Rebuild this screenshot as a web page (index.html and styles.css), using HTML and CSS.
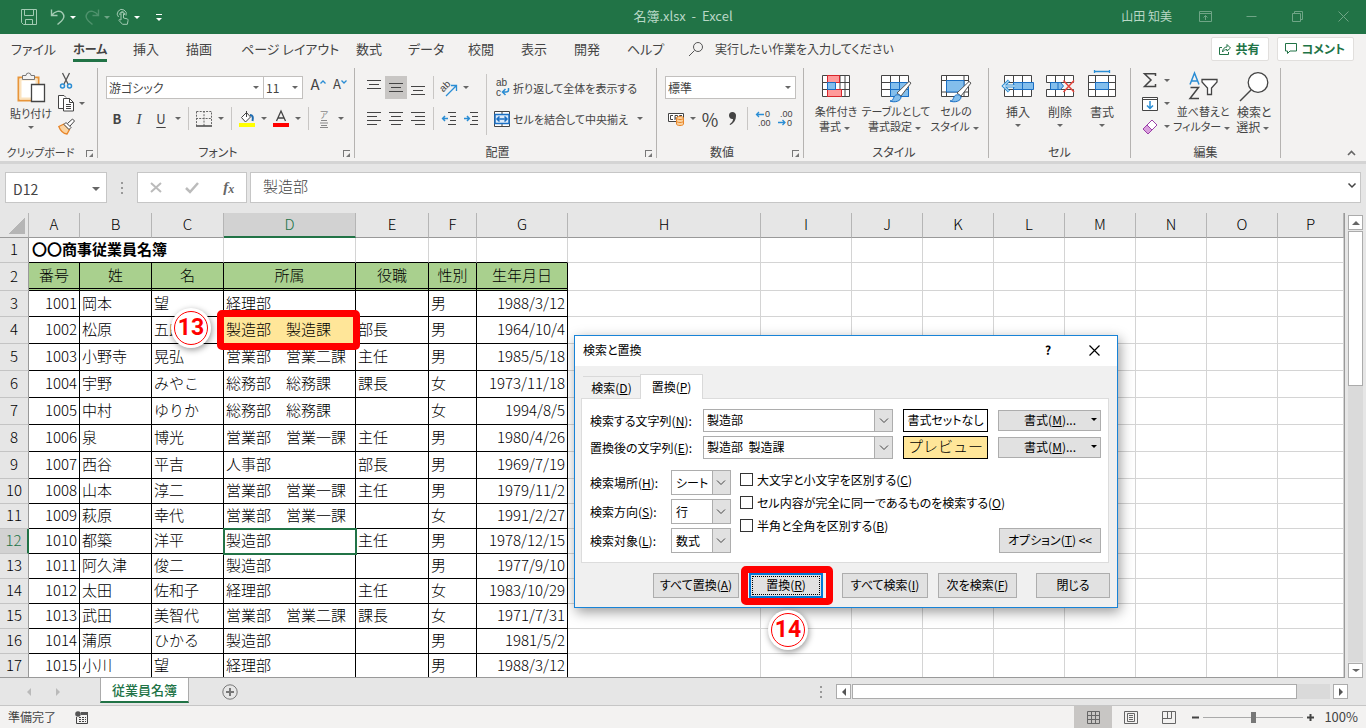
FILE: index.html
```html
<!DOCTYPE html>
<html lang="ja">
<head>
    <meta charset="UTF-8">
    <meta name="viewport" content="width=device-width, initial-scale=1.0">
    <title>名簿.xlsx - Excel</title>
    <link rel="stylesheet" href="styles.css">
</head>
<body>
    <header class="titlebar">
        <div class="quick">
            <button class="save" aria-label="上書き保存"><svg width="18" height="18" viewBox="0 0 18 18"><path d="M1.5 1.5h15v15H3.5l-2-2zM4.5 1.5v6h9v-6M5.5 16.5v-5h7v5"/></svg></button>
            <button class="undo" aria-label="元に戻す"><svg width="16" height="18" viewBox="0 0 16 18"><path d="M1.5 1.5v6h6M1.5 7.5C5 3 10 2 12.5 5s1 6-1 8l-4 3.5" stroke-width="1.4"/></svg></button>
            <span class="arrow"></span>
            <button class="redo" aria-label="やり直し"><svg width="16" height="18" viewBox="0 0 16 18"><path d="M14.5 1.5v6h-6M14.5 7.5C11 3 6 2 3.5 5s-1 6 1 8l4 3.5" stroke-width="1.4"/></svg></button>
            <span class="arrow dim"></span>
            <button class="touch" aria-label="タッチ"><svg width="14" height="18" viewBox="0 0 14 18"><path d="M5 12V5.5a1.2 1.2 0 0 1 2.500 0V10l3.500.8c1 .3 1.200 1 1 2l-.7 3.500H6.500L3 12.500c-.5-1 .8-1.500 2-.2M2.500 9A4.500 4.500 0 1 1 10 7.500M4 7a2.400 2.400 0 1 1 4.500 0"/></svg></button>
            <span class="arrow"></span>
            <button class="more" aria-label="カスタマイズ"><span class="arrow"></span></button>
        </div>
        <div class="doc-name">名簿.xlsx&nbsp; -&nbsp; Excel</div>
        <div class="window-tools">
            <span class="user">山田 知美</span>
            <button aria-label="リボンの表示オプション"><svg width="13" height="11" viewBox="0 0 13 11"><path d="M.5 .5h12v10H.5zM.5 2.5h12M6.500 9V4.500M4.500 6.500l2-2 2 2"/></svg></button>
            <button aria-label="最小化"><svg width="11" height="11" viewBox="0 0 11 11"><path d="M.5 5.500h10"/></svg></button>
            <button aria-label="元のサイズに戻す"><svg width="11" height="11" viewBox="0 0 11 11"><path d="M.5 2.500h8v8h-8zM2.500 2.500v-2h8v8h-2"/></svg></button>
            <button aria-label="閉じる"><svg width="11" height="11" viewBox="0 0 11 11"><path d="M.5 .5l10 10M10.500 .5l-10 10"/></svg></button>
        </div>
    </header>

    <nav class="tabs">
        <a href="#">ファイル</a>
        <a href="#" class="active">ホーム</a>
        <a href="#">挿入</a>
        <a href="#">描画</a>
        <a href="#">ページ レイアウト</a>
        <a href="#">数式</a>
        <a href="#">データ</a>
        <a href="#">校閲</a>
        <a href="#">表示</a>
        <a href="#">開発</a>
        <a href="#">ヘルプ</a>
        <a href="#" class="tell-me"><svg width="16" height="16" viewBox="0 0 16 16"><circle cx="10" cy="6" r="4.500"/><path d="M6.500 9.500L1 15"/></svg>実行したい作業を入力してください</a>
        <button class="share"><svg width="12" height="13" viewBox="0 0 12 13"><path d="M3 4.500H.5v7h9V9M3.500 9c0-3 2-5 4.500-5V1.500L11.500 5 8 8V6.500C6 6.500 4.500 7.500 3.500 9z"/></svg>共有</button>
        <button class="share"><svg width="12" height="12" viewBox="0 0 12 12"><path d="M.5 .5h11V8H5L2.500 10.500V8h-2z"/></svg>コメント</button>
    </nav>

    <section class="ribbon">
        <div class="group">
            <div class="tools">
                <button class="big paste">
                    <svg width="28" height="32" viewBox="0 0 28 32"><path d="M1.500 5.500h20v23h-20z" fill="#fff" stroke="#e8953a" stroke-width="2"/><path d="M3.500 7.500h16v19h-16z" fill="none" stroke="#fbe3bf" stroke-width="2"/><path d="M5.500 7.500v-4h3.500a2.500 2.500 0 0 1 5 0h3.500v4z" fill="#f3f2f1" stroke="#777"/><path d="M14.500 12.500h13v17h-13z" fill="#fff" stroke="#444" stroke-width="1.300"/></svg>
                    貼り付け<span class="arrow"></span>
                </button>
                <div class="stack">
                    <button aria-label="切り取り"><svg width="14" height="18" viewBox="0 0 14 18"><path d="M3.500 1l5.500 11M10.500 1L5 12" stroke="#555" stroke-width="1.300"/><circle cx="3.500" cy="14" r="2" stroke="#2a8dd4" stroke-width="1.500"/><circle cx="10.500" cy="14" r="2" stroke="#2a8dd4" stroke-width="1.500"/></svg></button>
                    <button aria-label="コピー"><svg width="17" height="17" viewBox="0 0 17 17"><path d="M5 13.500H.5V.5H6l2 2" fill="#fff"/><path d="M5.500 3.500h6l4 4v8.500h-10z" fill="#fff"/><path d="M11.500 3.500v4h4M8 9.500h5M8 11.500h5M8 13.500h5"/></svg></button><span class="arrow"></span>
                    <button aria-label="書式のコピー"><svg width="17" height="17" viewBox="0 0 17 17"><path d="M.8 8.500L6 6l5.500 5.500L9 16c-3-.3-6.500-3-8.200-7.500z" fill="#fbd3a0" stroke="#e8862a" stroke-width="1.300"/><path d="M6 6.500L8 4.500l5 5-2 2zM9.500 5.500l5-4.500 2 2-4.500 5" fill="#fff"/></svg></button>
                </div>
            </div>
            <div class="group-name">クリップボード<span class="launch"></span></div>
        </div>

        <div class="group">
            <div class="tools rows">
                <div class="row">
                    <span class="select font-name"><select aria-label="フォント"><option>游ゴシック</option></select><span class="arrow"></span></span>
                    <span class="select font-size"><select aria-label="フォント サイズ"><option>11</option></select><span class="arrow"></span></span>
                    <button class="grow">A<svg width="6" height="4" viewBox="0 0 6 4"><path d="M.5 3.500L3 1l2.500 2.500" stroke="#2a8dd4" stroke-width="1.300"/></svg></button>
                    <button class="grow small">A<svg width="6" height="4" viewBox="0 0 6 4"><path d="M.5 .5L3 3 5.500 .5" stroke="#2a8dd4" stroke-width="1.300"/></svg></button>
                </div>
                <div class="row">
                    <button class="bold">B</button>
                    <button class="italic">I</button>
                    <button class="under">U</button><span class="arrow"></span>
                    <span class="sep"></span>
                    <button aria-label="罫線"><svg width="16" height="16" viewBox="0 0 16 16"><path d="M.5 .5h15v14M.5 .5v14M8 0v15M0 7.500h16" stroke-dasharray="2 1.200" stroke="#666"/><path d="M0 15h16" stroke-width="1.500"/></svg></button><span class="arrow"></span>
                    <span class="sep"></span>
                    <button aria-label="塗りつぶしの色"><svg width="16" height="16" viewBox="0 0 16 16"><path d="M2.500 6.500L7.500 1.500l4 4.500L6.500 11zM7.500 0v6" fill="#fff"/><path d="M11 4c2.500 0 3.500 2 2.500 6" stroke="#1f6cb0" stroke-width="2"/><path d="M0 12h16v4H0z" fill="#ff0" stroke="none"/></svg></button><span class="arrow"></span>
                    <button aria-label="フォントの色"><svg width="16" height="16" viewBox="0 0 16 16"><path d="M3.500 10L8 0l4.500 10M5 7h6" stroke-width="1.300"/><path d="M0 12h16v4H0z" fill="#f00" stroke="none"/></svg></button><span class="arrow"></span>
                    <span class="sep"></span>
                    <button class="ruby"><span>ア</span><svg width="8" height="8" viewBox="0 0 8 8"><path d="M1 .5h6M0 3h8M1 5.500h6M0 7.500h8" stroke="#888"/></svg></button><span class="arrow"></span>
                </div>
            </div>
            <div class="group-name">フォント<span class="launch"></span></div>
        </div>

        <div class="group">
            <div class="tools">
                <div class="rows">
                    <div class="row">
                        <button aria-label="上揃え"><svg width="14" height="16" viewBox="0 0 14 16"><path d="M0 .5h14M2 4.500h10M0 8.500h14"/></svg></button>
                        <button class="pressed" aria-label="上下中央揃え"><svg width="14" height="16" viewBox="0 0 14 16"><path d="M0 3.500h14M2 7.500h10M0 11.500h14"/></svg></button>
                        <button aria-label="下揃え"><svg width="14" height="16" viewBox="0 0 14 16"><path d="M0 6.500h14M2 10.500h10M0 14.500h14"/></svg></button>
                        <span class="sep"></span>
                        <button aria-label="方向"><svg width="18" height="18" viewBox="0 0 18 18"><text x="1" y="12" transform="rotate(-45 4 10)" class="ab">ab</text><path d="M6 17L16 7M11 6.500h5.500V12" stroke="#2a8dd4" stroke-width="1.300"/></svg></button><span class="arrow"></span>
                    </div>
                    <div class="row">
                        <button aria-label="左揃え"><svg width="14" height="14" viewBox="0 0 14 14"><path d="M0 .5h14M0 4.500h10M0 8.500h14M0 12.500h10"/></svg></button>
                        <button aria-label="中央揃え"><svg width="14" height="14" viewBox="0 0 14 14"><path d="M0 .5h14M2 4.500h10M0 8.500h14M2 12.500h10"/></svg></button>
                        <button aria-label="右揃え"><svg width="14" height="14" viewBox="0 0 14 14"><path d="M0 .5h14M4 4.500h10M0 8.500h14M4 12.500h10"/></svg></button>
                        <span class="sep"></span>
                        <button aria-label="インデントを減らす"><svg width="14" height="14" viewBox="0 0 14 14"><path d="M6 .5h8M8 4.500h6M8 8.500h6M6 12.500h8"/><path d="M6 6.500H.8M3 4L.6 6.500 3 9" stroke="#2a8dd4" stroke-width="1.500"/></svg></button>
                        <button aria-label="インデントを増やす"><svg width="14" height="14" viewBox="0 0 14 14"><path d="M6 .5h8M8 4.500h6M8 8.500h6M6 12.500h8"/><path d="M0 6.500h5M3 4l2.400 2.500L3 9" stroke="#2a8dd4" stroke-width="1.500"/></svg></button>
                    </div>
                </div>
                <span class="sep tall"></span>
                <div class="rows">
                    <button class="wide"><svg width="16" height="18" viewBox="0 0 16 18"><text x="2" y="7" class="abc">ab</text><text x="2" y="17" class="abc">c</text><path d="M14.500 9v2c0 1.500-1 2-2.500 2H9M11.500 10l-3 3 3 3" stroke="#2a8dd4" stroke-width="1.500"/></svg>折り返して全体を表示する</button>
                    <button class="wide"><svg width="16" height="16" viewBox="0 0 16 16"><path d="M.5 .5h15v15H.5zM8 0v3M8 13v3" fill="#fff"/><path d="M1 3.500h14v9H1z" fill="#dcebfa" stroke="#1a6fc4" stroke-width="1.500"/><path d="M3 8h10M5.500 5.500L3 8l2.500 2.500M10.500 5.500L13 8l-2.500 2.500" stroke="#1a6fc4" stroke-width="1.500"/></svg>セルを結合して中央揃え<span class="arrow"></span></button>
                </div>
            </div>
            <div class="group-name">配置<span class="launch"></span></div>
        </div>

        <div class="group">
            <div class="tools rows">
                <span class="select number-format"><select aria-label="表示形式"><option>標準</option></select><span class="arrow"></span></span>
                <div class="row">
                    <button aria-label="通貨表示形式"><svg width="17" height="14" viewBox="0 0 17 14"><path d="M.5 1.500h15v8H.5z" fill="#fff"/><path d="M5 3.500H2.500v4H5M7 8V3.500h2.500V8M7 6h2.500M11.500 6V3.500H14"/><path d="M8.500 6v6c0 2 7 2 7 0V6c0-2-7-2-7 0zM8.500 6c0 2 7 2 7 0M8.500 9c0 2 7 2 7 0" fill="#fbd3a0" stroke="#e8862a"/></svg></button><span class="arrow"></span>
                    <button class="percent">%</button>
                    <button aria-label="桁区切りスタイル"><svg width="9" height="15" viewBox="0 0 9 15"><path d="M4.500 1a3.500 3.500 0 0 1 3.500 4c0 4-2 7-5.500 9l-1-.8C4 11.500 5 10 5 8 2.500 8.300 1 6.500 1 4.500A3.500 3.500 0 0 1 4.500 1z" fill="#444" stroke="none"/></svg></button>
                    <span class="sep"></span>
                    <button aria-label="小数点以下の表示桁数を増やす"><svg width="17" height="17" viewBox="0 0 17 17"><text x="10" y="7" class="dec">0</text><text x="3" y="16" class="dec">.00</text><path d="M9 4.500H1.500M4 2L1.500 4.500 4 7" stroke="#2a8dd4" stroke-width="1.300"/></svg></button>
                    <button aria-label="小数点以下の表示桁数を減らす"><svg width="17" height="17" viewBox="0 0 17 17"><text x="3" y="7" class="dec">.00</text><text x="10" y="16" class="dec">0</text><path d="M1 12.500h7M5.500 10L8 12.500 5.500 15" stroke="#2a8dd4" stroke-width="1.300"/></svg></button>
                </div>
            </div>
            <div class="group-name">数値<span class="launch"></span></div>
        </div>

        <div class="group">
            <div class="tools">
                <button class="big">
                    <svg width="28" height="30" viewBox="0 0 28 30"><path d="M.5 3.500h27v21H.5zM5.500 3.500v21M18 3.500v21M23 3.500v21M.5 10.500h27M.5 17.500h27" fill="#fff"/><path d="M5.500 3.500h12v7h-12zM5.500 17.500h14v7h-14z" fill="#ff9a9a" stroke="#d8262c"/><path d="M5.500 10.500h8v7h-8z" fill="#83beec" stroke="#1a6fc4"/></svg>
                    条件付き<span>書式<span class="arrow"></span></span>
                </button>
                <button class="big mid">
                    <svg width="32" height="30" viewBox="0 0 32 30"><path d="M1.500 3.500h27v21h-27zM10.500 3.500v21M19.500 3.500v21M1.500 10.500h27M1.500 17.500h27" fill="#fff"/><path d="M10.500 10.500h18v14h-18zM19.500 10.500v14M10.500 17.500h18" fill="#83beec" stroke="#1a6fc4"/><path d="M17 21L29 9.500l2 1.500L21 24z" fill="#fff" stroke="#555"/><path d="M10 29c3 0 3-2 4-4 1-3 6-3 7 0 0 4-6 6-11 4z" fill="#83beec" stroke="#1a6fc4"/></svg>
                    テーブルとして<span>書式設定<span class="arrow"></span></span>
                </button>
                <button class="big">
                    <svg width="32" height="30" viewBox="0 0 32 30"><path d="M1.500 3.500h27v21h-27zM6.500 3.500v21M24 3.500v21M1.500 8.500h27M1.500 20h27" fill="#fff"/><path d="M6.500 8.500H24V20H6.500z" fill="#83beec" stroke="#1a6fc4"/><path d="M17 21L29 9.500l2 1.500L21 24z" fill="#fff" stroke="#555"/><path d="M10 29c3 0 3-2 4-4 1-3 6-3 7 0 0 4-6 6-11 4z" fill="#83beec" stroke="#1a6fc4"/></svg>
                    セルの<span>スタイル<span class="arrow"></span></span>
                </button>
            </div>
            <div class="group-name">スタイル</div>
        </div>

        <div class="group">
            <div class="tools">
                <button class="big narrow">
                    <svg width="32" height="30" viewBox="0 0 32 30"><path d="M2.500 3.500h27v7h-27zM2.500 17.500h27v7h-27zM11.500 3.500v7M20.500 3.500v7M11.500 17.500v7M20.500 17.500v7" fill="#fff"/><path d="M11.500 10.500h20v7h-20zM20.500 10.500v7" fill="#83beec" stroke="#1a6fc4"/><path d="M7 8.500L1.500 14 7 19.500M1.500 14H13" stroke="#2a8dd4" stroke-width="3"/><path d="M7 8.500L1.500 14 7 19.500M1.500 14H13" stroke="#fff"/></svg>
                    挿入<span class="arrow"></span>
                </button>
                <button class="big narrow">
                    <svg width="32" height="30" viewBox="0 0 32 30"><path d="M2.500 3.500h27v7h-27zM2.500 17.500h27v7h-27zM11.500 3.500v7M20.500 3.500v7M11.500 17.500v7M20.500 17.500v7" fill="#fff"/><path d="M6.500 10.500h10l3 3.500-3 3.500h-10zM14 10.500v7" fill="#83beec" stroke="#1a6fc4"/><path d="M19.500 8.500L30 20M30 8.500L19.500 20" stroke="#e8453c" stroke-width="1.500"/></svg>
                    削除<span class="arrow"></span>
                </button>
                <button class="big narrow">
                    <svg width="28" height="30" viewBox="0 0 28 30"><path d="M.5 3.500h27v21H.5zM7.500 3.500v21M20.500 3.500v21M.5 10.500h27M.5 17.500h27" fill="#fff"/><path d="M7.500 10.500h13v7h-13z" fill="#83beec" stroke="#1a6fc4"/><path d="M6.500-2v3M21.500-2v3M6.500-.5h15" stroke="#2a8dd4" stroke-width="1.300"/></svg>
                    書式<span class="arrow"></span>
                </button>
            </div>
            <div class="group-name">セル</div>
        </div>

        <div class="group">
            <div class="tools">
                <div class="stack pairs">
                    <button aria-label="合計"><svg width="14" height="15" viewBox="0 0 14 15"><path d="M12.500 3V.8H1.500L8 7l-6.500 6.500h11V11" stroke-width="1.500"/></svg></button><span class="arrow"></span>
                    <button aria-label="フィル"><svg width="16" height="14" viewBox="0 0 16 14"><path d="M.5 .5h15v13H.5zM.5 2.500h15" fill="#fff"/><path d="M8 4v7M5 8.500l3 3 3-3" stroke="#2a8dd4" stroke-width="1.500"/></svg></button><span class="arrow"></span>
                    <button aria-label="クリア"><svg width="16" height="16" viewBox="0 0 16 16"><path d="M1 10L10 1l5 5-9 9z" fill="#fff" stroke="#9b3fa8"/><path d="M1 10l4-4 5 5-4 4z" fill="#d9a0dd" stroke="#9b3fa8"/></svg></button><span class="arrow"></span>
                </div>
                <button class="big filter">
                    <svg width="32" height="30" viewBox="0 0 32 30"><path d="M3 12.500L7.500 1 12 12.500M4.500 9h6" stroke="#2a8dd4" stroke-width="1.500"/><path d="M3.500 15.500h8L3 26.500h9" stroke-width="1.500"/><path d="M15 7.500h15V10l-5.500 6v6.500h-4V16L15 10z" fill="#fff" stroke-width="1.300"/></svg>
                    並べ替えと<span>フィルター<span class="arrow"></span></span>
                </button>
                <button class="big narrow">
                    <svg width="30" height="30" viewBox="0 0 30 30"><circle cx="19" cy="10.500" r="9.800" fill="#fff" stroke-width="1.300"/><path d="M12 18L1 29" stroke-width="1.500"/></svg>
                    検索と<span>選択<span class="arrow"></span></span>
                </button>
            </div>
            <div class="group-name">編集</div>
        </div>
        <button class="collapse" aria-label="リボンを折りたたむ"><svg width="9" height="6" viewBox="0 0 9 6"><path d="M1 5l3.500-3.500L8 5" stroke="#666" stroke-width="1.600"/></svg></button>
    </section>

    <section class="formula-bar">
        <span class="name-box"><input type="text" value="D12" aria-label="名前ボックス"><span class="arrow"></span></span>
        <span class="dots"><i></i><i></i><i></i></span>
        <div class="fx">
            <button aria-label="キャンセル"><svg width="12" height="11" viewBox="0 0 12 11"><path d="M1 1l10 9M11 1L1 10" stroke="#bbb" stroke-width="2"/></svg></button>
            <button aria-label="入力"><svg width="14" height="11" viewBox="0 0 14 11"><path d="M1 6l4 4 8-9" stroke="#bbb" stroke-width="2.500"/></svg></button>
            <button class="fx-label">f<small>x</small></button>
        </div>
        <div class="formula"><input type="text" value="製造部" aria-label="数式バー"><svg width="8" height="5" viewBox="0 0 8 5"><path d="M.5 .5L4 4 7.500 .5" stroke-width="1.500"/></svg></div>
    </section>

    <main class="sheet">
        <div class="grid-wrap">
            <table class="grid">
                <colgroup id="cols"></colgroup>
                <thead><tr id="letters"></tr></thead>
                <tbody id="cells"></tbody>
            </table>
        </div>
        <div class="vscroll">
            <button aria-label="上へ"><span class="arrow up"></span></button>
            <div class="track"><div class="thumb"></div></div>
            <button aria-label="下へ"><span class="arrow"></span></button>
        </div>

        <div class="ring ring-cell"></div>
        <div class="marker marker-13">13</div>

        <div class="dialog" role="dialog" aria-labelledby="dialog-title">
            <div class="dialog-title">
                <span id="dialog-title">検索と置換</span>
                <button class="help">?</button>
                <button aria-label="閉じる"><svg width="11" height="11" viewBox="0 0 11 11"><path d="M.5 .5l10 10M10.500 .5l-10 10" stroke="#000" stroke-width="1.200"/></svg></button>
            </div>
            <div class="dialog-tabs">
                <button>検索(<u>D</u>)</button>
                <button class="current">置換(<u>P</u>)</button>
            </div>
            <div class="panel">
                <div class="field">
                    <label for="find">検索する文字列(<u>N</u>):</label>
                    <span class="combo"><input type="text" id="find" value="製造部"><button aria-label="履歴"><svg width="8" height="5" viewBox="0 0 8 5"><path d="M0 .5L4 4.500 8 .5"/></svg></button></span>
                    <span class="preview">書式セットなし</span>
                    <button class="btn format"><span>書式(<u>M</u>)...</span><span class="arrow"></span></button>
                </div>
                <div class="field">
                    <label for="replace">置換後の文字列(<u>E</u>):</label>
                    <span class="combo"><input type="text" id="replace" value="製造部  製造課"><button aria-label="履歴"><svg width="8" height="5" viewBox="0 0 8 5"><path d="M0 .5L4 4.500 8 .5"/></svg></button></span>
                    <span class="preview filled">プレビュー</span>
                    <button class="btn format"><span>書式(<u>M</u>)...</span><span class="arrow"></span></button>
                </div>
                <div class="options">
                    <div class="scopes">
                        <label for="within">検索場所(<u>H</u>):</label>
                        <span class="drop"><select id="within"><option>シート</option></select><svg width="8" height="5" viewBox="0 0 8 5"><path d="M0 .5L4 4.500 8 .5"/></svg></span>
                        <label for="direction">検索方向(<u>S</u>):</label>
                        <span class="drop"><select id="direction"><option>行</option></select><svg width="8" height="5" viewBox="0 0 8 5"><path d="M0 .5L4 4.500 8 .5"/></svg></span>
                        <label for="look-in">検索対象(<u>L</u>):</label>
                        <span class="drop"><select id="look-in"><option>数式</option></select><svg width="8" height="5" viewBox="0 0 8 5"><path d="M0 .5L4 4.500 8 .5"/></svg></span>
                    </div>
                    <div class="checks">
                        <label><input type="checkbox"><span>大文字と小文字を区別する(<u>C</u>)</span></label>
                        <label><input type="checkbox"><span>セル内容が完全に同一であるものを検索する(<u>O</u>)</span></label>
                        <label><input type="checkbox"><span>半角と全角を区別する(<u>B</u>)</span></label>
                    </div>
                    <button class="btn toggle">オプション(<u>T</u>) &lt;&lt;</button>
                </div>
            </div>
            <div class="dialog-buttons">
                <div>
                    <button class="btn all">すべて置換(<u>A</u>)</button>
                    <span class="ringed"><button class="btn default">置換(<u>R</u>)</button><span class="ring ring-button"></span></span>
                </div>
                <div>
                    <button class="btn all">すべて検索(<u>I</u>)</button>
                    <button class="btn next">次を検索(<u>F</u>)</button>
                </div>
                <button class="btn">閉じる</button>
            </div>
            <div class="marker marker-14">14</div>
        </div>
    </main>

    <footer>
        <div class="sheet-tabs">
            <span class="moves"><span class="arrow left"></span><span class="arrow right"></span></span>
            <a href="#" class="sheet-tab">従業員名簿</a>
            <button class="add" aria-label="新しいシート"><svg width="16" height="16" viewBox="0 0 16 16"><circle cx="8" cy="8" r="7.200" stroke="#777"/><path d="M8 4v8M4 8h8" stroke-width="2" stroke="#777"/></svg></button>
            <span class="dots"><i></i><i></i><i></i></span>
            <div class="hscroll">
                <button aria-label="左へ"><span class="arrow left"></span></button>
                <div class="track"><div class="thumb"></div></div>
                <button aria-label="右へ"><span class="arrow right"></span></button>
            </div>
        </div>
        <div class="status">
            <span>準備完了</span>
            <svg width="13" height="13" viewBox="0 0 13 13"><circle cx="3" cy="3" r="2.800" fill="#555" stroke="none"/><path d="M6 1h7v3H6z" fill="#555" stroke="none"/><path d="M1.500 6v6.500h11V4M4 6.500h2M7 6.500h2M10 6.500h1M4 8.500h2M7 8.500h2M10 8.500h1M4 10.500h2M7 10.500h2M10 10.500h1"/></svg>
            <div class="views">
                <button class="pressed" aria-label="標準"><svg width="13" height="13" viewBox="0 0 13 13"><path d="M.5 .5h12v12H.5zM4.500 .5v12M8.500 .5v12M.5 4.500h12M.5 8.500h12"/></svg></button>
                <button aria-label="ページ レイアウト"><svg width="14" height="13" viewBox="0 0 14 13"><path d="M.5 .5h13v12H.5zM3.500 2.500h7v8h-7zM5 4.500h4M5 6.500h4M5 8.500h4"/></svg></button>
                <button aria-label="改ページ プレビュー"><svg width="14" height="13" viewBox="0 0 14 13"><path d="M.5 .5h13v12H.5zM.5 7.500h9v-7M5.500 .5v7"/></svg></button>
            </div>
            <button class="zoom-step" aria-label="縮小"><svg width="7" height="7" viewBox="0 0 7 7"><path d="M0 3.500h7" stroke-width="2"/></svg></button>
            <input type="range" class="zoom" min="10" max="190" value="100" aria-label="ズーム">
            <button class="zoom-step" aria-label="拡大"><svg width="7" height="7" viewBox="0 0 7 7"><path d="M0 3.500h7M3.500 0v7" stroke-width="2"/></svg></button>
            <span class="percent-text">100%</span>
        </div>
    </footer>

    <script>
        const columns = 'ABCDEFGHIJKLMNOP'.split('');
        const staff = [
            [1001, '岡本', '望', '経理部', '', '男', '1988/3/12'],
            [1002, '松原', '五郎', '製造部　製造課', '部長', '男', '1964/10/4'],
            [1003, '小野寺', '晃弘', '営業部　営業二課', '主任', '男', '1985/5/18'],
            [1004, '宇野', 'みやこ', '総務部　総務課', '課長', '女', '1973/11/18'],
            [1005, '中村', 'ゆりか', '総務部　総務課', '', '女', '1994/8/5'],
            [1006, '泉', '博光', '営業部　営業一課', '主任', '男', '1980/4/26'],
            [1007, '西谷', '平吉', '人事部', '部長', '男', '1969/7/19'],
            [1008, '山本', '淳二', '営業部　営業一課', '主任', '男', '1979/11/2'],
            [1009, '萩原', '幸代', '営業部　営業一課', '', '女', '1991/2/27'],
            [1010, '都築', '洋平', '製造部', '主任', '男', '1978/12/15'],
            [1011, '阿久津', '俊二', '製造部', '', '男', '1977/9/10'],
            [1012, '太田', '佐和子', '経理部', '主任', '女', '1983/10/29'],
            [1013, '武田', '美智代', '営業部　営業二課', '課長', '女', '1971/7/31'],
            [1014, '蒲原', 'ひかる', '製造部', '', '男', '1981/5/2'],
            [1015, '小川', '望', '経理部', '', '男', '1988/3/12']
        ];
        const blanks = '<td></td>'.repeat(9);

        document.getElementById('cols').innerHTML = '<col class="col-head">' +
            columns.map(c => `<col class="col-${c.toLowerCase()}">`).join('');
        document.getElementById('letters').innerHTML = '<th class="corner"></th>' +
            columns.map(c => `<th class="${c === 'D' ? 'chosen' : ''}">${c}</th>`).join('');

        let html = `<tr><th>1</th><td colspan="3" class="heading ink-row">〇〇商事従業員名簿</td>` +
            '<td class="ink-row"></td>'.repeat(4) + blanks + '</tr>';
        html += '<tr class="labels"><th>2</th>' +
            ['番号', '姓', '名', '所属', '役職', '性別', '生年月日'].map(t => `<td class="ink">${t}</td>`).join('') +
            blanks + '</tr>';
        staff.forEach((person, i) => {
            const n = i + 3;
            html += `<tr class="${n === 3 ? 'first' : n < 10 ? 'high' : ''}"><th class="${n === 12 ? 'chosen' : ''}">${n}</th>`;
            person.forEach((value, j) => {
                let name = 'ink';
                if (j === 0 || j === 6) name += ' number';
                if (n === 4 && j === 3) name += ' found';
                if (n === 12 && j === 3) name += ' cursor';
                html += `<td class="${name}">${value}</td>`;
            });
            html += blanks + '</tr>';
        });
        document.getElementById('cells').innerHTML = html;
    </script>
</body>
</html>
```
FILE: styles.css
```css
* {
    box-sizing: border-box;
}
body {
    margin: 0;
    height: 100vh;
    display: flex;
    flex-direction: column;
    overflow: hidden;
    background-color: #e6e6e6;
    color: #444;
    font-family: "Noto Sans CJK JP", sans-serif;
    font-size: 12px;
    line-height: 16px;
    font-feature-settings: "palt";
}
button, input, select {
    font: inherit;
    font-feature-settings: inherit;
    color: inherit;
    margin: 0;
    padding: 0;
    border: 0;
    border-radius: 0;
    background: none;
    outline: none;
}
select {
    appearance: none;
    width: 100%;
    height: 100%;
}
a {
    color: inherit;
    text-decoration: none;
}
svg {
    fill: none;
    stroke: #444;
    flex: none;
    overflow: visible;
}
svg text {
    fill: #444;
    stroke: none;
    font-family: "Liberation Sans", sans-serif;
}
.ab, .abc {
    font-size: 10px;
}
.dec {
    font-size: 9px;
}
.arrow {
    width: 12px;
    display: inline-flex;
    justify-content: center;
    align-items: center;
    flex: none;
    vertical-align: middle;
}
.arrow::before {
    content: "";
    border: 3px solid transparent;
    border-top-color: #666;
    border-bottom-width: 0;
}
.arrow.up::before {
    border-top-width: 0;
    border-bottom: 4px solid #666;
}
.arrow.left::before {
    border: 4px solid transparent;
    border-right-color: #555;
    border-left-width: 0;
}
.arrow.right::before {
    border: 4px solid transparent;
    border-left-color: #555;
    border-right-width: 0;
}

/* title bar */
.titlebar {
    display: grid;
    grid-template-columns: 1fr auto 1fr;
    align-items: center;
    height: 34px;
    flex: none;
    padding-bottom: 2px;
    background-color: #217346;
    color: #b9d8c6;
}
.titlebar svg {
    stroke: #a3cbb3;
}
.quick {
    display: flex;
    align-items: center;
    padding: 2px 0 0 20px;
}
.quick button {
    display: flex;
}
.quick .arrow::before {
    border-top-color: #fff;
}
.save {
    margin-right: 12px;
}
.redo {
    margin-left: 4px;
}
.redo, .quick .dim {
    opacity: 0.35;
}
.quick .touch {
    margin-left: 2px;
}
.quick .arrow {
    width: 14px;
}
.quick .more {
    margin-left: 12px;
}
.quick .more .arrow {
    border-top: 1px solid #fff;
    width: 6px;
    padding-top: 3px;
}
.window-tools {
    display: flex;
    justify-content: flex-end;
    align-items: center;
}
.window-tools button {
    width: 46px;
    display: flex;
    justify-content: center;
}
.window-tools svg {
    stroke: #6fa586;
}
.user {
    margin-right: 10px;
}
.doc-name {
    font-size: 13px;
}

/* tabs */
.tabs {
    display: grid;
    grid-template-columns: 62px 60px 53px 55px 115px 52px 60px 53px 53px 53px 61px 1fr auto auto;
    align-items: center;
    flex: none;
    height: 32px;
    padding: 0 12px 0 11px;
    background-color: #f3f2f1;
    font-size: 13px;
    white-space: nowrap;
}
.tabs a {
    justify-self: start;
    padding: 2px 0;
    border-bottom: 3px solid transparent;
}
.tabs .active {
    font-weight: bold;
    font-size: 12px;
    border-color: #217346;
}
.tabs .tell-me {
    display: flex;
    align-items: center;
    gap: 11px;
    font-size: 12px;
}
.tell-me svg {
    stroke: #555;
}
.share {
    display: flex;
    align-items: center;
    gap: 5px;
    height: 24px;
    padding: 0 8px 0 7px;
    margin: 0 0 2px 8px;
    background-color: #fff;
    border: 1px solid #e1dfdd;
    border-radius: 2px;
    color: #217346;
    font-size: 12px;
    font-weight: bold;
}
.share svg {
    stroke: #217346;
}

/* ribbon */
.ribbon {
    display: flex;
    flex: none;
    padding: 2px 0 3px;
    background-color: #f3f2f1;
    border-bottom: 3px solid #d4d4d4;
    white-space: nowrap;
}
.group {
    display: flex;
    flex-direction: column;
    border-right: 1px solid #b5b3b1;
    padding-left: 8px;
    height: 90px;
}
.group:nth-child(1) { width: 98px; }
.group:nth-child(2) { width: 257px; }
.group:nth-child(3) { width: 302px; }
.group:nth-child(4) { width: 147px; }
.group:nth-child(5) { width: 185px; padding-left: 4px; }
.group:nth-child(6) { width: 142px; }
.group:nth-child(7) { width: 150px; }
.tools {
    display: flex;
    flex: 1;
}
.group-name {
    display: flex;
    justify-content: center;
    position: relative;
    height: 14px;
    margin-left: -8px;
    padding-right: 16px;
}
.group:first-child .group-name {
    font-size: 11px;
}
.group-name:not(:has(.launch)) {
    padding-right: 0;
}
.launch {
    position: absolute;
    right: 4px;
    bottom: 1px;
    width: 7px;
    height: 7px;
    border-top: 1px solid #777;
    border-left: 1px solid #777;
}
.launch::before {
    content: "";
    position: absolute;
    right: 0;
    bottom: 0;
    border: 2px solid #777;
    border-top-color: transparent;
    border-left-color: transparent;
}
.rows {
    display: flex;
    flex-direction: column;
    gap: 8px;
    padding-top: 8px;
}
.tools .rows {
    flex: none;
}
.row {
    display: flex;
    height: 23px;
}
.row button {
    width: 22px;
    display: flex;
    align-items: center;
    justify-content: center;
}
.pressed {
    background-color: #c8c6c4;
}
.sep {
    width: 1px;
    margin: 0 4px;
    background-color: #c8c6c4;
}
.sep.tall {
    margin: 6px 4px 9px;
}
.select {
    display: flex;
    align-items: center;
    height: 23px;
    background-color: #fff;
    border: 1px solid #c2c0be;
}
.select select {
    padding-left: 2px;
    flex: 1;
    min-width: 0;
}
.select .arrow {
    margin-right: 1px;
}
.font-name {
    width: 158px;
}
.font-size {
    width: 39px;
    border-left: 0;
}
.number-format {
    width: 131px;
}
.row .grow {
    align-items: flex-start;
    font-size: 15px;
    padding-left: 8px;
}
.row .small {
    font-size: 13px;
}
.grow svg {
    margin-top: 4px;
}
.row .bold {
    font-weight: bold;
    font-size: 13px;
}
.row .italic {
    font-family: "Liberation Serif", serif;
    font-style: italic;
    font-size: 15px;
}
.row .under {
    text-decoration: underline;
    text-underline-offset: 3px;
    font-size: 13px;
}
.row .ruby {
    flex-direction: column;
    font-size: 9px;
    line-height: 10px;
    color: #888;
}
.row .percent {
    font-size: 18px;
}
.wide {
    display: flex;
    align-items: center;
    height: 23px;
    font-size: 11px;
}
.wide svg {
    margin: 0 3px;
}
.wide .arrow {
    margin-left: 6px;
}
.big {
    display: flex;
    flex-direction: column;
    align-items: center;
    min-width: 56px;
    padding-top: 4px;
    font-size: 11px;
    line-height: 15px;
}
.big.mid {
    width: 64px;
}
.big.narrow {
    min-width: 42px;
    font-size: 12px;
}
.big svg {
    margin-bottom: 2px;
}
.big > .arrow {
    height: 12px;
}
.big.paste {
    min-width: 50px;
    margin-left: -2px;
}
.stack {
    display: grid;
    grid-template-columns: 20px 12px;
    grid-auto-rows: 23px;
    align-items: center;
    padding-top: 1px;
}
.stack button {
    display: flex;
    justify-content: center;
    grid-column: 1;
}
.stack.pairs {
    grid-template-columns: 22px 12px;
}
.collapse {
    margin: 0 10px 2px auto;
    align-self: flex-end;
    display: flex;
}

/* formula bar */
.formula-bar {
    display: flex;
    flex: none;
    height: 49px;
    padding: 8px 5px 10px;
    font-size: 15px;
}
.name-box, .fx, .formula {
    display: flex;
    align-items: center;
    background-color: #fff;
    border: 1px solid #c6c6c6;
}
.name-box {
    width: 102px;
    font-size: 14px;
    padding: 2px 4px 0 7px;
}
.name-box .arrow::before {
    border-width: 4px 4px 0;
}
.name-box input, .formula input {
    flex: 1;
    min-width: 0;
}
.formula input {
    font-weight: 300;
}
.dots {
    display: flex;
    flex-direction: column;
    justify-content: center;
    align-items: center;
    gap: 3px;
    width: 30px;
}
.dots i {
    width: 2px;
    height: 2px;
    background-color: #999;
}
.fx {
    width: 110px;
    justify-content: space-around;
    margin-right: 3px;
}
.fx button {
    display: flex;
}
.fx .fx-label {
    font: italic bold 15px "Liberation Serif", serif;
    color: #666;
}
.fx small {
    font-size: 12px;
    margin-top: 3px;
}
.formula {
    flex: 1;
    padding: 0 4px 4px 12px;
}

/* sheet */
.sheet {
    display: flex;
    flex: 1;
    min-height: 0;
    position: relative;
    font-feature-settings: normal;
}
.grid-wrap {
    flex: 1;
    overflow: hidden;
    border-right: 1px solid #999;
    border-bottom: 1px solid #999;
}
.grid {
    width: 100%;
    table-layout: fixed;
    border-collapse: separate;
    border-spacing: 0;
    background-color: #fff;
    color: #000;
    font-size: 15px;
    font-weight: 300;
    line-height: 20px;
    white-space: nowrap;
}
.col-head { width: 29px; }
.col-a { width: 51px; }
.col-b, .col-c { width: 72px; }
.col-d { width: 132px; }
.col-e { width: 73px; }
.col-f { width: 48px; }
.col-g, .col-i { width: 91px; }
.col-h { width: 193px; }
.col-j, .col-k, .col-l, .col-m, .col-n, .col-o { width: 71px; }
.grid th, .grid td {
    height: 25px;
    padding: 0 2px 2px;
    border-right: 1px solid #d4d4d4;
    border-bottom: 1px solid #d4d4d4;
    text-align: left;
}
.grid th {
    padding: 0 0 2px;
    background-color: #e6e6e6;
    border-bottom-color: #c4c4c4;
    border-right-color: #999;
    text-align: center;
    font-weight: 300;
}
.grid thead th {
    border-color: #b5b5b5;
    border-bottom-color: #999;
}
.grid thead .corner {
    background: linear-gradient(135deg, transparent 50%, #b5b5b5 50%) no-repeat 8px 4px / 17px 17px #e6e6e6;
}
.grid .chosen {
    background-color: #d2d2d2;
    color: #217346;
}
.grid thead .chosen {
    border-bottom: 2px solid #217346;
}
.grid tbody .chosen {
    border-right: 2px solid #217346;
}
.grid .ink {
    border-color: #000;
}
.grid .ink-row {
    border-bottom-color: #000;
}
.grid .heading {
    font-weight: bold;
    padding-left: 3px;
}
.grid .number {
    text-align: right;
}
.labels td, .labels th {
    height: 28px;
}
.labels .ink {
    background-color: #a9d08e;
    border-bottom: 3px double #000;
    text-align: center;
}
.first td {
    height: 26px;
}
.high td {
    height: 27px;
}
.grid .found {
    background-color: #ffe699;
}
.grid .cursor {
    outline: 2px solid #217346;
    outline-offset: -1px;
}
.vscroll {
    display: flex;
    flex-direction: column;
    gap: 1px;
    width: 21px;
    padding: 2px 3px 0;
}
.vscroll button, .hscroll button {
    display: flex;
    align-items: center;
    justify-content: center;
    width: 15px;
    height: 15px;
    flex: none;
    background-color: #fff;
    border: 1px solid #ababab;
}
.vscroll .arrow::before {
    border-left-width: 4px;
    border-right-width: 4px;
}
.track {
    flex: 1;
    background-color: #dadada;
}
.thumb {
    background-color: #fff;
    border: 1px solid #ababab;
}
.vscroll .thumb {
    height: 36%;
}

/* call-outs */
.ring {
    position: absolute;
    border: 7px solid #f00;
    border-radius: 5px;
    pointer-events: none;
}
.ring-cell {
    left: 217px;
    top: 97px;
    width: 143px;
    height: 40px;
}
.ring-button {
    left: -8px;
    top: -7px;
    width: 92px;
    height: 39px;
}
.marker {
    position: absolute;
    width: 34px;
    height: 34px;
    border: 1px solid #f00;
    border-radius: 50%;
    background-color: #fff;
    box-shadow: 0 0 0 3px #fff, 1px 2px 6px 3px rgba(0, 0, 0, 0.4);
    color: #f00;
    font: bold 23px/32px Roboto, sans-serif;
    text-align: center;
}
.marker-13 {
    left: 174px;
    top: 98px;
}
.marker-14 {
    left: 196px;
    top: 277px;
}

/* find and replace */
.dialog {
    position: absolute;
    left: 574px;
    top: 122px;
    width: 544px;
    background-color: #f0f0f0;
    border: 1px solid #1883d7;
    box-shadow: 2px 4px 12px rgba(0, 0, 0, 0.4);
    color: #000;
    font-feature-settings: "palt";
    white-space: nowrap;
}
.dialog-title {
    display: flex;
    align-items: center;
    height: 30px;
    padding: 0 0 2px 8px;
    background-color: #fff;
}
.dialog-title span {
    flex: 1;
}
.dialog-title button {
    width: 46px;
    display: flex;
    justify-content: center;
}
.help {
    font-weight: bold;
}
.dialog-tabs {
    display: flex;
    align-items: flex-end;
    height: 33px;
    padding-left: 8px;
}
.dialog-tabs button {
    width: 57px;
    height: 23px;
    padding-bottom: 1px;
    border-top: 1px solid #d9d9d9;
}
.dialog-tabs .current {
    position: relative;
    width: 63px;
    height: 25px;
    background-color: #fff;
    border: 1px solid #d9d9d9;
    border-bottom: 0;
}
.panel {
    display: flex;
    flex-direction: column;
    gap: 4px;
    margin: -1px 8px 0 6px;
    padding: 10px 7px 9px 8px;
    background-color: #fff;
    border: 1px solid #dcdcdc;
}
.field {
    display: flex;
    align-items: center;
    gap: 10px;
}
.field label {
    width: 103px;
}
.combo {
    display: flex;
    flex: 1;
    min-width: 0;
    height: 23px;
    border: 1px solid #adadad;
}
.combo input {
    flex: 1;
    min-width: 0;
    padding: 0 3px 2px;
}
.combo button {
    width: 18px;
    display: flex;
    align-items: center;
    justify-content: center;
    background-color: #e1e1e1;
    border-left: 1px solid #adadad;
}
.preview {
    width: 85px;
    height: 23px;
    border: 1px solid #000;
    line-height: 20px;
    text-align: center;
}
.preview.filled {
    background-color: #ffe699;
    font-size: 15px;
    font-weight: 300;
    line-height: 18px;
    font-feature-settings: normal;
}
.btn {
    min-width: 74px;
    height: 25px;
    padding-bottom: 2px;
    background-color: #e1e1e1;
    border: 1px solid #adadad;
}
.btn.format {
    display: flex;
    align-items: center;
    justify-content: flex-end;
    gap: 12px;
    width: 103px;
    height: 21px;
}
.btn .arrow::before {
    border-top-color: #000;
}
.options {
    display: flex;
    margin-top: 7px;
}
.scopes {
    display: grid;
    grid-template-columns: 81px 60px;
    grid-auto-rows: 25px;
    gap: 4px 0;
    align-items: center;
}
.drop {
    position: relative;
    height: 25px;
    border: 1px solid #adadad;
    background: linear-gradient(#adadad, #adadad) no-repeat right 17px top / 1px 100%, linear-gradient(#e1e1e1, #e1e1e1) no-repeat right / 17px 100%;
}
.drop select {
    padding-left: 4px;
}
.drop svg {
    position: absolute;
    right: 5px;
    top: 9px;
    pointer-events: none;
}
.checks {
    display: flex;
    flex-direction: column;
    flex: 1;
    min-width: 0;
    gap: 4px;
    margin-left: 9px;
}
.checks label {
    display: flex;
    align-items: center;
    gap: 4px;
    height: 19px;
}
.checks input {
    appearance: none;
    flex: none;
    width: 13px;
    height: 13px;
    border: 1px solid #333;
}
.btn.toggle {
    width: 102px;
    flex: none;
    align-self: flex-end;
}
.dialog-buttons {
    display: flex;
    justify-content: flex-end;
    gap: 19px;
    padding: 10px 7px 9px;
}
.dialog-buttons div {
    display: flex;
    gap: 10px;
}
.btn.all {
    min-width: 86px;
}
.btn.next {
    min-width: 79px;
}
.ringed {
    position: relative;
}
.btn.default {
    border: 2px solid #0078d7;
    outline: 1px dotted #000;
    outline-offset: -4px;
}

/* bottom bars */
footer {
    flex: none;
}
.sheet-tabs {
    display: flex;
    height: 28px;
    border-bottom: 1px solid #c6c6c6;
}
.moves {
    display: flex;
    gap: 17px;
    width: 100px;
    padding-left: 23px;
}
.moves .arrow::before {
    opacity: 0.3;
}
.sheet-tab {
    height: 25px;
    padding: 4px 11px 0;
    background-color: #fff;
    border: 1px solid #ababab;
    border-top: 0;
    border-bottom: 2px solid #217346;
    color: #217346;
    font-size: 13px;
    font-weight: 500;
}
.add {
    display: flex;
    align-items: center;
    margin-left: 33px;
}
.sheet-tabs .dots {
    margin-left: auto;
}
.hscroll {
    display: flex;
    align-items: center;
    gap: 1px;
    width: 38%;
    max-width: 512px;
    margin-right: 18px;
}
.hscroll .track {
    height: 15px;
    margin-right: 2px;
}
.hscroll .thumb {
    width: 93%;
    height: 15px;
}
.status {
    display: flex;
    align-items: center;
    height: 22px;
    padding: 0 8px;
    background-color: #f3f2f1;
}
.status > svg {
    margin-left: 19px;
}
.views {
    display: flex;
    margin-left: auto;
    height: 22px;
}
.views button {
    width: 38px;
    display: flex;
    align-items: center;
    justify-content: center;
}
.views svg {
    stroke: #666;
}
.zoom-step {
    display: flex;
    margin: 0 4px;
}
.zoom {
    appearance: none;
    width: 100px;
    height: 11px;
    background: linear-gradient(#aaa, #aaa) no-repeat center / 100% 1px;
}
.zoom::-webkit-slider-thumb {
    appearance: none;
    width: 5px;
    height: 11px;
    background-color: #777;
}
.percent-text {
    margin-left: 6px;
    font-size: 13px;
}
```
